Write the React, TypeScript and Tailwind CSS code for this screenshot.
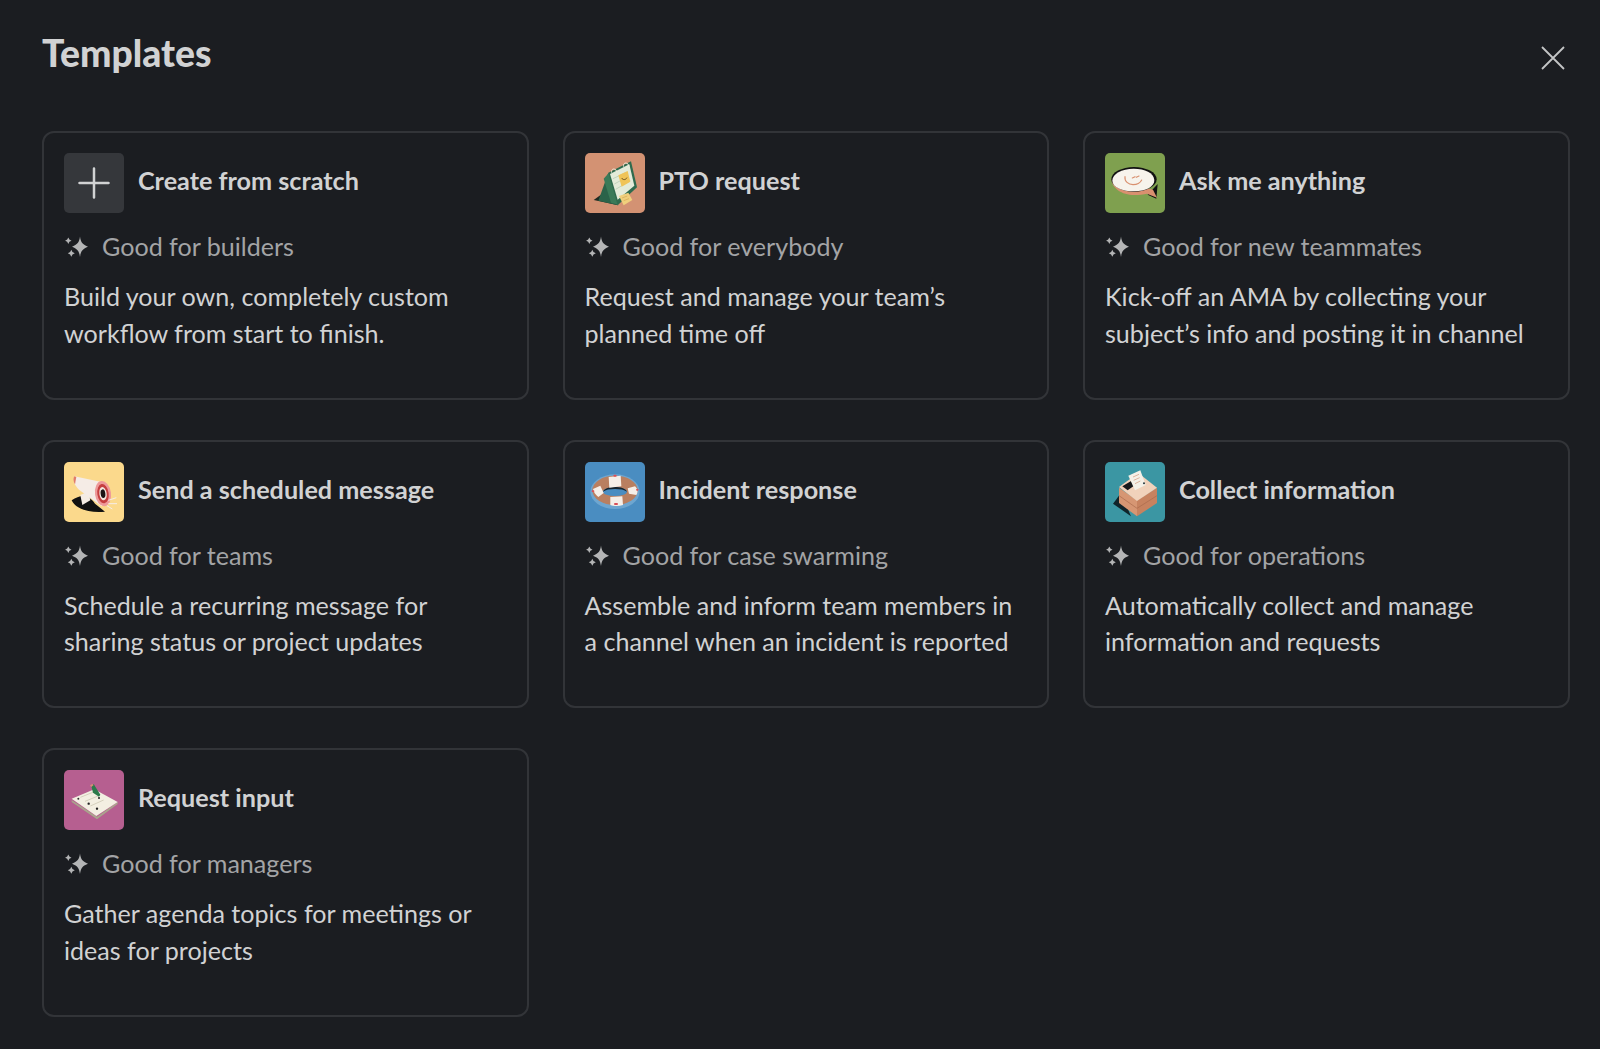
const CalendarArt = () => (
  <svg viewBox="30 25 180 180" className="w-full h-full">
    <rect x="30" y="25" width="180" height="180" fill="#d39273" />
    <path d="M56 166l30-22 44 38z" fill="#1d2a22" />
    <path d="M100 84L70 168l58 14z" fill="#2b6349" />
    <path d="M86 102l16-18 28 96-22-6z" fill="#3a7a58" />
    <path d="M100 84l68-34 18 78-58 54z" fill="#2f6b4e" />
    <path d="M105 88l58-29 15 64-50 42z" fill="#e3ebd9" />
    <path d="M114 102l42-20M118 118l44-24M122 134l44-26" stroke="#9dbb9f" strokeWidth="1.500" />
    <path d="M130 92l28-13 8 32-26 15z" fill="#f0c458" />
    <path d="M140 100c4 7 12 6 16-1" fill="none" stroke="#6b5220" strokeWidth="3" />
    <path d="M132 154l28-10 12 22-26 16z" fill="#f0cf7c" />
    <path d="M141 160l16-6M146 168l16-6" stroke="#c79a45" strokeWidth="1.500" />
    <path d="M110 84c-4-12 12-16 16-2M146 66c-4-12 12-16 16-2" fill="none" stroke="#f3ebdc" strokeWidth="3" />
  </svg>
)

const BubbleArt = () => (
  <svg viewBox="30 25 180 180" className="w-full h-full">
    <rect x="30" y="25" width="180" height="180" fill="#7fa04f" />
    <path d="M188 118l-4 44-26-12z" fill="#111" />
    <path d="M50 105c0 24 30 46 68 46 14 0 28-2 38-4l30 12-12-24-124-34z" fill="#d9906f" />
    <ellipse cx="117" cy="104" rx="68" ry="37" fill="#111" />
    <path d="M52 108c0-20 28-36 64-36 34 0 60 12 62 34 1 20-26 34-60 34-36 0-66-12-66-32z" fill="#f7f3ec" />
    <path d="M90 96c-2 14 10 24 24 24 12 0 22-6 26-14" fill="none" stroke="#d9906f" strokeWidth="3.500" strokeLinecap="round" />
    <path d="M112 100l8-4M124 98l8-4" stroke="#d9906f" strokeWidth="3.500" strokeLinecap="round" />
  </svg>
)

const MegaphoneArt = () => (
  <svg viewBox="27 25 180 180" className="w-full h-full">
    <rect x="27" y="25" width="180" height="180" fill="#fbd98c" />
    <path d="M50 140c26-18 50-20 70 10l30 24c-40 4-86-4-100-34z" fill="#111" />
    <path d="M76 124l24-10 6 26-24 14z" fill="#f4ece4" />
    <path d="M58 68L136 84c16 16 18 52 4 74L72 108C58 96 54 80 58 68z" fill="#f5ece6" />
    <path d="M58 68c-4 6-3 16 2 24l4-22z" fill="#e07c6a" />
    <ellipse cx="144" cy="120" rx="24" ry="38" transform="rotate(-8 144 120)" fill="#ee9a9a" />
    <ellipse cx="144" cy="120" rx="17" ry="29" transform="rotate(-8 144 120)" fill="#c63f3f" />
    <ellipse cx="144" cy="120" rx="11" ry="20" transform="rotate(-8 144 120)" fill="#f3e6de" />
    <ellipse cx="144" cy="120" rx="7" ry="13" transform="rotate(-8 144 120)" fill="#1c1414" />
    <path d="M160 140l24-8M160 150l26 0M156 156l16 10" stroke="#f5ece6" strokeWidth="3" />
  </svg>
)

const RingArt = () => (
  <svg viewBox="30 27 180 180" className="w-full h-full">
    <rect x="30" y="27" width="180" height="180" fill="#4a8dc1" />
    <ellipse cx="120" cy="116" rx="74" ry="52" fill="#6ea6d0" />
    <ellipse cx="120" cy="112" rx="68" ry="44" fill="#b97f60" />
    <ellipse cx="120" cy="116" rx="36" ry="13" fill="#4a8dc1" />
    <path d="M84 116c4-10 20-14 36-14s32 4 36 14c-8-6-20-8-36-8s-28 2-36 8z" fill="#17242c" />
    <path d="M101 72l36-4 2 32-36 4z" fill="#f6efe8" />
    <path d="M54 108l22-10 10 22-16 12c-8-6-14-14-16-24z" fill="#f6efe8" />
    <path d="M158 106l22-6c8 8 10 18 4 26l-22-4z" fill="#f6efe8" />
    <path d="M106 132l36-2 2 26c-12 4-28 4-38 0z" fill="#f6efe8" />
    <rect x="115" y="65" width="10" height="6" rx="3" fill="#d9505a" />
    <rect x="117" y="150" width="12" height="6" rx="3" fill="#d9505a" />
    <rect x="50" y="112" width="8" height="5" rx="2.500" fill="#d9505a" />
    <rect x="183" y="108" width="8" height="5" rx="2.500" fill="#d9505a" />
  </svg>
)

const BoxArt = () => (
  <svg viewBox="30 27 180 180" className="w-full h-full">
    <rect x="30" y="27" width="180" height="180" fill="#3b96a3" />
    <path d="M54 152l24-32 30 70z" fill="#10242a" />
    <path d="M72 104l54 38v48L72 150z" fill="#d69673" />
    <path d="M126 142l60-38v46l-60 40z" fill="#c7825f" />
    <path d="M72 128l54 38 60-38" fill="none" stroke="#a9694b" strokeWidth="2" />
    <path d="M72 102l58-42 56 44-60 40z" fill="#f1d2bb" />
    <path d="M82 100l30-18 14 10-28 20z" fill="#17191b" />
    <path d="M100 68l36-16 16 44-32 16z" fill="#f4f1e8" />
    <path d="M114 72l18-8M116 82l18-8M120 92l16-8" stroke="#d6a68e" strokeWidth="2.500" />
    <circle cx="147" cy="91" r="3" fill="#2a3a40" />
  </svg>
)

const PaperArt = () => (
  <svg viewBox="25 30 180 180" className="w-full h-full">
    <rect x="25" y="30" width="180" height="180" fill="#b65f90" />
    <path d="M48 120l76 50 62-44v6l-62 46-76-52z" fill="#a9a48c" />
    <path d="M48 116l68-28 70 38-64 42z" fill="#f3efe2" />
    <path d="M74 112l40-16M88 124l44-18M104 138l40-18" stroke="#cfcab6" strokeWidth="2.500" />
    <path d="M107 78l7-6 20 32-4 6-18-12z" fill="#2c7a4b" />
    <path d="M103 76l7-4 4 3-7 6z" fill="#d98c76" />
    <circle cx="68" cy="116" r="3" fill="#333" />
    <circle cx="99" cy="131" r="3.500" fill="#222" />
    <circle cx="124" cy="146" r="3.500" fill="#222" />
    <circle cx="130" cy="114" r="3" fill="#222" />
  </svg>
)

const PlusArt = () => (
  <div className="w-full h-full bg-[#35373b] flex items-center justify-center">
    <svg viewBox="0 0 32 32" className="w-8 h-8" fill="none" stroke="#d1d2d3" strokeWidth="2.500" strokeLinecap="round">
      <path d="M16 1.500v29M1.500 16h29" />
    </svg>
  </div>
)

const Sparkle = () => (
  <svg viewBox="0 0 24 24" className="w-6 h-6 shrink-0" fill="#b4b5b6">
    <path d="M16 1.500c.8 5.400 2 7.800 8 10.200-6 2.400-7.200 4.800-8 10.300-.8-5.500-2-7.900-8-10.300 6-2.400 7.200-4.800 8-10.200z" />
    <path d="M4.300 2.500l1.100 2.100 2.100 1.100-2.100 1.100-1.100 2.100-1.100-2.100-2.100-1.100 2.100-1.100z" />
    <path d="M7.300 14.800l1.200 2.300 2.300 1.200-2.300 1.200-1.200 2.300-1.200-2.300-2.300-1.200 2.300-1.200z" />
  </svg>
)

interface Template {
  title: string
  good: string
  lines: string[]
  art: React.ReactNode
}

const templates: Template[] = [
  { title: 'Create from scratch', good: 'Good for builders', lines: ['Build your own, completely custom', 'workflow from start to finish.'], art: <PlusArt /> },
  { title: 'PTO request', good: 'Good for everybody', lines: ['Request and manage your team’s', 'planned time off'], art: <CalendarArt /> },
  { title: 'Ask me anything', good: 'Good for new teammates', lines: ['Kick-off an AMA by collecting your', 'subject’s info and posting it in channel'], art: <BubbleArt /> },
  { title: 'Send a scheduled message', good: 'Good for teams', lines: ['Schedule a recurring message for', 'sharing status or project updates'], art: <MegaphoneArt /> },
  { title: 'Incident response', good: 'Good for case swarming', lines: ['Assemble and inform team members in', 'a channel when an incident is reported'], art: <RingArt /> },
  { title: 'Collect information', good: 'Good for operations', lines: ['Automatically collect and manage', 'information and requests'], art: <BoxArt /> },
  { title: 'Request input', good: 'Good for managers', lines: ['Gather agenda topics for meetings or', 'ideas for projects'], art: <PaperArt /> },
]

export default function App() {
  return (
    <div className="w-[1600px] h-[1049px] overflow-hidden bg-[#1b1d21] pl-[42px] pr-[30px] font-['Lato',sans-serif] text-[#d1d2d3]">
      <div className="flex justify-between h-[131px]">
        <h1 className="pt-[31px] text-[37.300px] leading-[44px] font-black">Templates</h1>
        <svg viewBox="0 0 24 24" className="w-6 h-6 mt-[46px] mr-[5px]" fill="none" stroke="#c4c5c6" strokeWidth="1.800">
          <path d="M1 1l22 22M23 1L1 23" />
        </svg>
      </div>
      <div className="grid grid-cols-[486.500px_486.500px_486.500px] gap-x-[34px] gap-y-[40px]">
        {templates.map((t) => (
          <div key={t.title} className="h-[268.500px] border-2 border-[#323438] rounded-[12px] pl-[20px] pt-[20px]">
            <div className="flex gap-[14px]">
              <div className="w-[60px] h-[60px] rounded-[5px] overflow-hidden shrink-0">{t.art}</div>
              <div className="text-[25.200px] leading-[55.500px] font-bold">{t.title}</div>
            </div>
            <div className="flex items-center gap-[14px] mt-[16px] h-[36px] text-[25.100px] text-[#a3a4a6]">
              <Sparkle />
              <span>{t.good}</span>
            </div>
            <div className="mt-[13px] text-[25.100px] leading-[36.700px]">
              {t.lines.map((l) => (
                <div key={l}>{l}</div>
              ))}
            </div>
          </div>
        ))}
      </div>
    </div>
  )
}
